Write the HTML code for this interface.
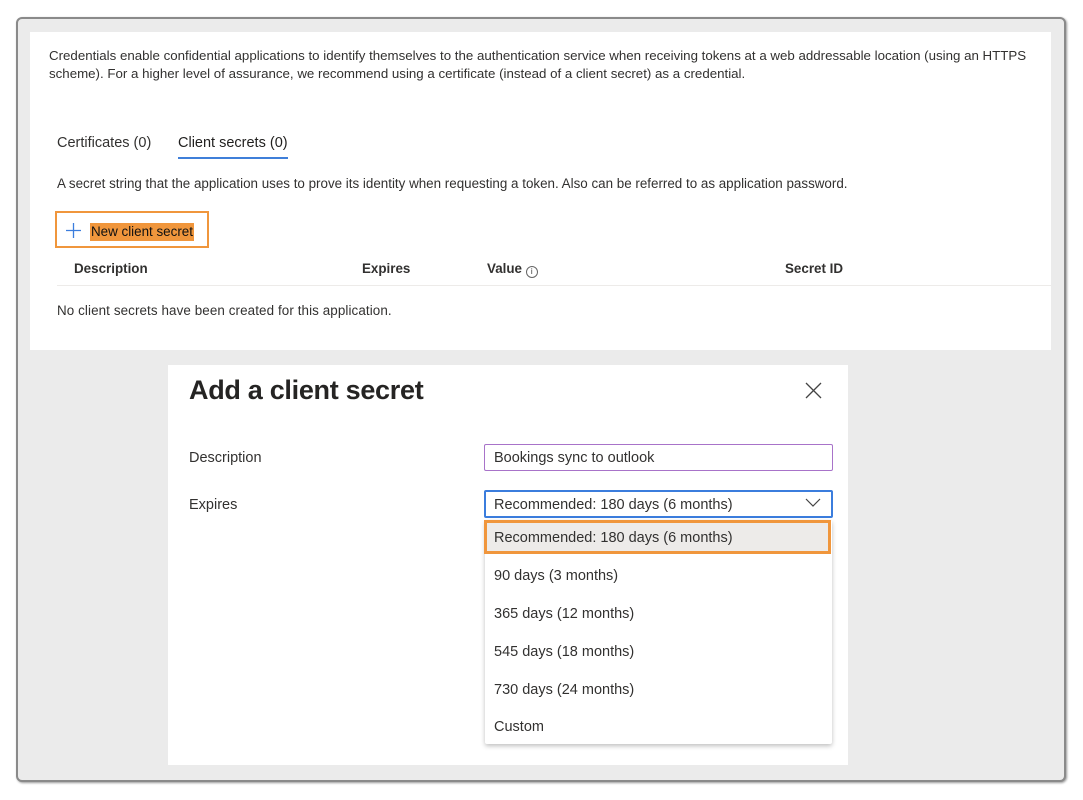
<!DOCTYPE html>
<html><head><meta charset="utf-8"><style>
*{margin:0;padding:0;box-sizing:border-box}
body{width:1083px;height:800px;background:#fff;font-family:"Liberation Sans",sans-serif;color:#323130;position:relative;overflow:hidden}
.a{position:absolute;white-space:nowrap}
#frame{position:absolute;left:16px;top:17px;width:1050px;height:765px;background:#ebebeb;border:2px solid #8a8a8a;border-radius:6px;box-shadow:1px 1px 2px #999}
.t13{font-size:13.4px}
.t14{font-size:14.5px}
.b{font-weight:bold}
.opt{position:absolute;left:494px;font-size:14.5px;color:#323130}
</style></head><body>
<div id="frame"></div>
<div class="a" style="left:30px;top:32px;width:1021px;height:318px;background:#fff"></div>
<div class="a" style="left:49px;top:47px;line-height:18px;font-size:13.3px">Credentials enable confidential applications to identify themselves to the authentication service when receiving tokens at a web addressable location (using an HTTPS<br>scheme). For a higher level of assurance, we recommend using a certificate (instead of a client secret) as a credential.</div>
<div class="a t14" style="left:57px;top:135px">Certificates (0)</div>
<div class="a t14" style="left:178px;top:135px;color:#201f1e">Client secrets (0)</div>
<div class="a" style="left:178px;top:157px;width:110px;height:2px;background:#3f7fd9"></div>
<div class="a" style="left:57px;top:176px;font-size:13.4px">A secret string that the application uses to prove its identity when requesting a token. Also can be referred to as application password.</div>
<div class="a" style="left:55px;top:211px;width:154px;height:37px;border:2px solid #f0963c"></div>
<svg class="a" style="left:65px;top:222px" width="17" height="17"><path d="M8.5 1v15M1 8.5h15" stroke="#3b7ddd" stroke-width="1.3"/></svg>
<div class="a t13" style="left:90px;top:223px;background:#f0963c;color:#111;padding:1px 1px;line-height:16px">New client secret</div>
<div class="a t13 b" style="left:74px;top:261px">Description</div>
<div class="a t13 b" style="left:362px;top:261px">Expires</div>
<div class="a t13 b" style="left:487px;top:261px">Value <span style="display:inline-block;width:12px;height:12px;border:1px solid #666;border-radius:50%;font-size:8px;text-align:center;line-height:10px;font-weight:normal;vertical-align:-1px">i</span></div>
<div class="a t13 b" style="left:785px;top:261px">Secret ID</div>
<div class="a" style="left:57px;top:285px;width:994px;height:1px;background:#edebe9"></div>
<div class="a t13" style="left:57px;top:303px;letter-spacing:0.1px">No client secrets have been created for this application.</div>

<div class="a" style="left:168px;top:365px;width:680px;height:400px;background:#fff"></div>
<div class="a" style="left:189px;top:375px;font-size:27px;font-weight:bold;color:#252423;letter-spacing:-0.3px">Add a client secret</div>
<svg class="a" style="left:805px;top:382px" width="17" height="17"><path d="M1 1l15 15M16 1L1 16" stroke="#444" stroke-width="1.3"/></svg>
<div class="a" style="left:189px;top:450px;font-size:14.5px">Description</div>
<div class="a" style="left:189px;top:497px;font-size:14.5px">Expires</div>
<div class="a" style="left:484px;top:444px;width:349px;height:27px;border:1px solid #a873c9;border-radius:2px"></div>
<div class="opt" style="top:450px">Bookings sync to outlook</div>
<div class="a" style="left:484px;top:490px;width:349px;height:28px;border:2px solid #3b7ddd;border-radius:2px"></div>
<div class="opt" style="top:497px">Recommended: 180 days (6 months)</div>
<svg class="a" style="left:805px;top:498px" width="16" height="10"><path d="M1 1l7 7 7-7" stroke="#444" stroke-width="1.2" fill="none"/></svg>
<div class="a" style="left:485px;top:520px;width:347px;height:224px;background:#fff;box-shadow:0 2px 5px rgba(0,0,0,.25);border-radius:2px"></div>
<div class="a" style="left:484px;top:520px;width:347px;height:34px;background:#edebe9;border:3px solid #f0963c"></div>
<div class="opt" style="top:530px">Recommended: 180 days (6 months)</div>
<div class="opt" style="top:568px">90 days (3 months)</div>
<div class="opt" style="top:606px">365 days (12 months)</div>
<div class="opt" style="top:644px">545 days (18 months)</div>
<div class="opt" style="top:682px">730 days (24 months)</div>
<div class="opt" style="top:719px">Custom</div>
</body></html>
